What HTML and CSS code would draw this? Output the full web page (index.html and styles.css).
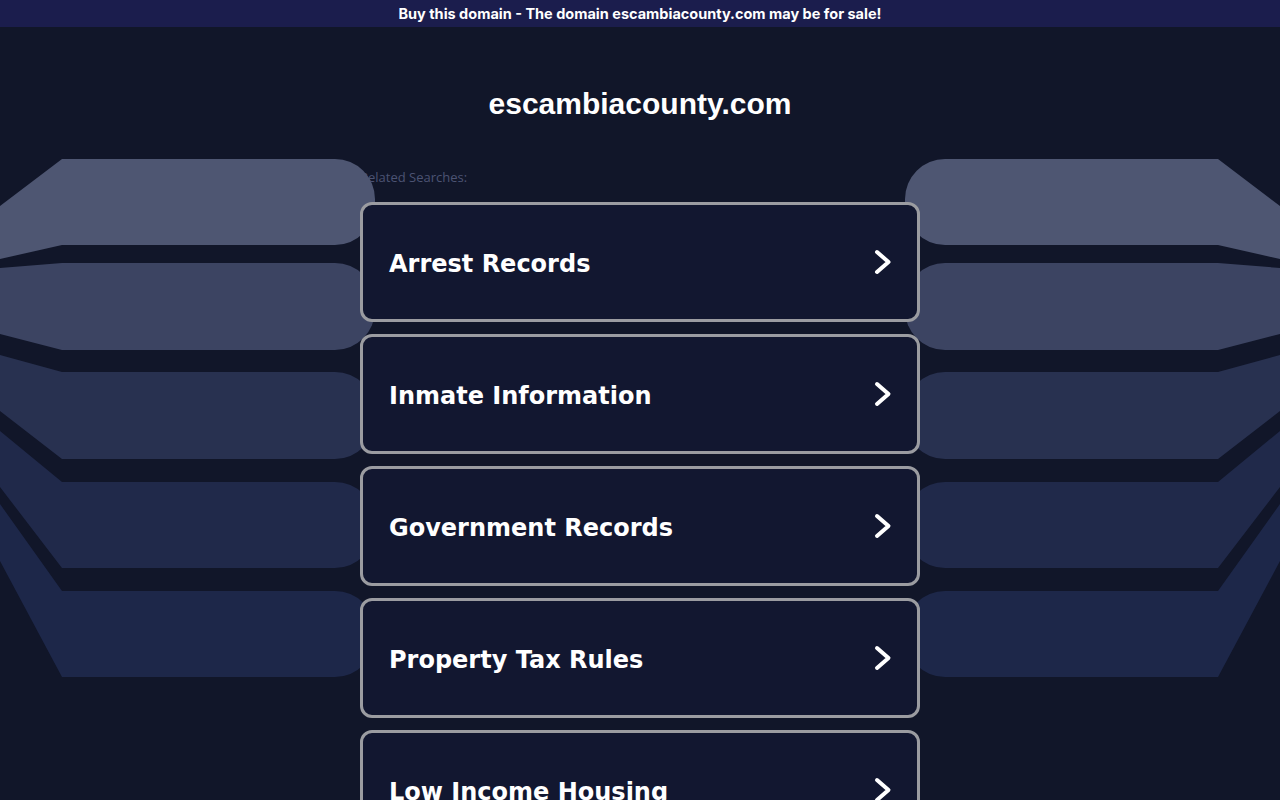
FILE: index.html
```html
<!DOCTYPE html>
<html lang="en">
<head>
<meta charset="utf-8">
<title>escambiacounty.com</title>
<link rel="stylesheet" href="styles.css">
</head>
<body>
<div class="topbar">Buy this domain - The domain escambiacounty.com may be for sale!</div>

<svg class="bands" width="1280" height="800" viewBox="0 0 1280 800" aria-hidden="true">
  <defs>
    <g id="bandset">
      <path fill="#4e5672" d="M0,206 L62,159 L335,159 A40,40 0 0 1 375,199 L375,205 A40,40 0 0 1 335,245 L62,245 L0,259 Z"/>
      <path fill="#3c4462" d="M0,268 L62,263 L335,263 A40,40 0 0 1 375,303 L375,310 A40,40 0 0 1 335,350 L62,350 L0,334 Z"/>
      <path fill="#283150" d="M0,355 L62,372 L335,372 A40,40 0 0 1 375,412 L375,419 A40,40 0 0 1 335,459 L62,459 L0,411 Z"/>
      <path fill="#20294a" d="M0,431 L62,482 L335,482 A40,40 0 0 1 375,522 L375,528 A40,40 0 0 1 335,568 L62,568 L0,487 Z"/>
      <path fill="#1d2749" d="M0,504 L62,591 L335,591 A40,40 0 0 1 375,631 L375,637 A40,40 0 0 1 335,677 L62,677 L0,561 Z"/>
    </g>
  </defs>
  <use href="#bandset"/>
  <use href="#bandset" transform="matrix(-1 0 0 1 1280 0)"/>
</svg>

<header class="site-head">
  <h1 class="domain">escambiacounty.com</h1>
</header>

<main class="searches">
  <div class="label">Related Searches:</div>
  <ul class="list">
    <li><a class="card" href="#"><span class="card-text">Arrest Records</span><svg class="chev" viewBox="0 0 18 26" width="18" height="26"><polyline points="3,3 14.5,13 3,23"/></svg></a></li>
    <li><a class="card" href="#"><span class="card-text">Inmate Information</span><svg class="chev" viewBox="0 0 18 26" width="18" height="26"><polyline points="3,3 14.5,13 3,23"/></svg></a></li>
    <li><a class="card" href="#"><span class="card-text">Government Records</span><svg class="chev" viewBox="0 0 18 26" width="18" height="26"><polyline points="3,3 14.5,13 3,23"/></svg></a></li>
    <li><a class="card" href="#"><span class="card-text">Property Tax Rules</span><svg class="chev" viewBox="0 0 18 26" width="18" height="26"><polyline points="3,3 14.5,13 3,23"/></svg></a></li>
    <li><a class="card" href="#"><span class="card-text">Low Income Housing</span><svg class="chev" viewBox="0 0 18 26" width="18" height="26"><polyline points="3,3 14.5,13 3,23"/></svg></a></li>
  </ul>
</main>
</body>
</html>
```

FILE: styles.css
```css
html, body {
  margin: 0;
  padding: 0;
}
body {
  background: #111629;
  color: #fff;
  min-height: 800px;
  overflow: hidden;
  position: relative;
}
.topbar {
  height: 27px;
  line-height: 27px;
  background: #1b1d4d;
  text-align: center;
  font-family: Inter, "Open Sans", sans-serif;
  font-weight: 700;
  font-size: 14.5px;
  color: #ffffff;
  position: relative;
  z-index: 3;
}
.bands {
  position: absolute;
  left: 0;
  top: 0;
  z-index: 1;
  pointer-events: none;
}
.site-head {
  padding-top: 60px;
  text-align: center;
  position: relative;
  z-index: 2;
}
.domain {
  margin: 0;
  font-family: "Liberation Sans", Arial, sans-serif;
  font-weight: 700;
  font-size: 30px;
  line-height: 34px;
  color: #ffffff;
}
.searches {
  width: 560px;
  margin: 48px auto 0;
}
.label {
  position: relative;
  z-index: 0;
  font-family: "Open Sans", "Noto Sans", sans-serif;
  font-size: 13px;
  line-height: 16px;
  color: #4c5373;
  margin-bottom: 17px;
}
.list {
  list-style: none;
  margin: 0;
  padding: 0;
  display: flex;
  flex-direction: column;
  gap: 12px;
  position: relative;
  z-index: 2;
}
.card {
  box-sizing: border-box;
  height: 120px;
  display: flex;
  align-items: center;
  justify-content: space-between;
  padding: 0 25px 0 26px;
  border: 3px solid #9b9ca1;
  border-radius: 12px;
  background: #121730;
  text-decoration: none;
  color: #ffffff;
}
.card-text {
  font-family: "DejaVu Sans", Verdana, sans-serif;
  font-weight: 700;
  font-size: 24px;
  margin-top: 4px;
}
.chev {
  display: block;
  fill: none;
  stroke: #ffffff;
  stroke-width: 4;
  stroke-linecap: round;
  stroke-linejoin: round;
}
```
